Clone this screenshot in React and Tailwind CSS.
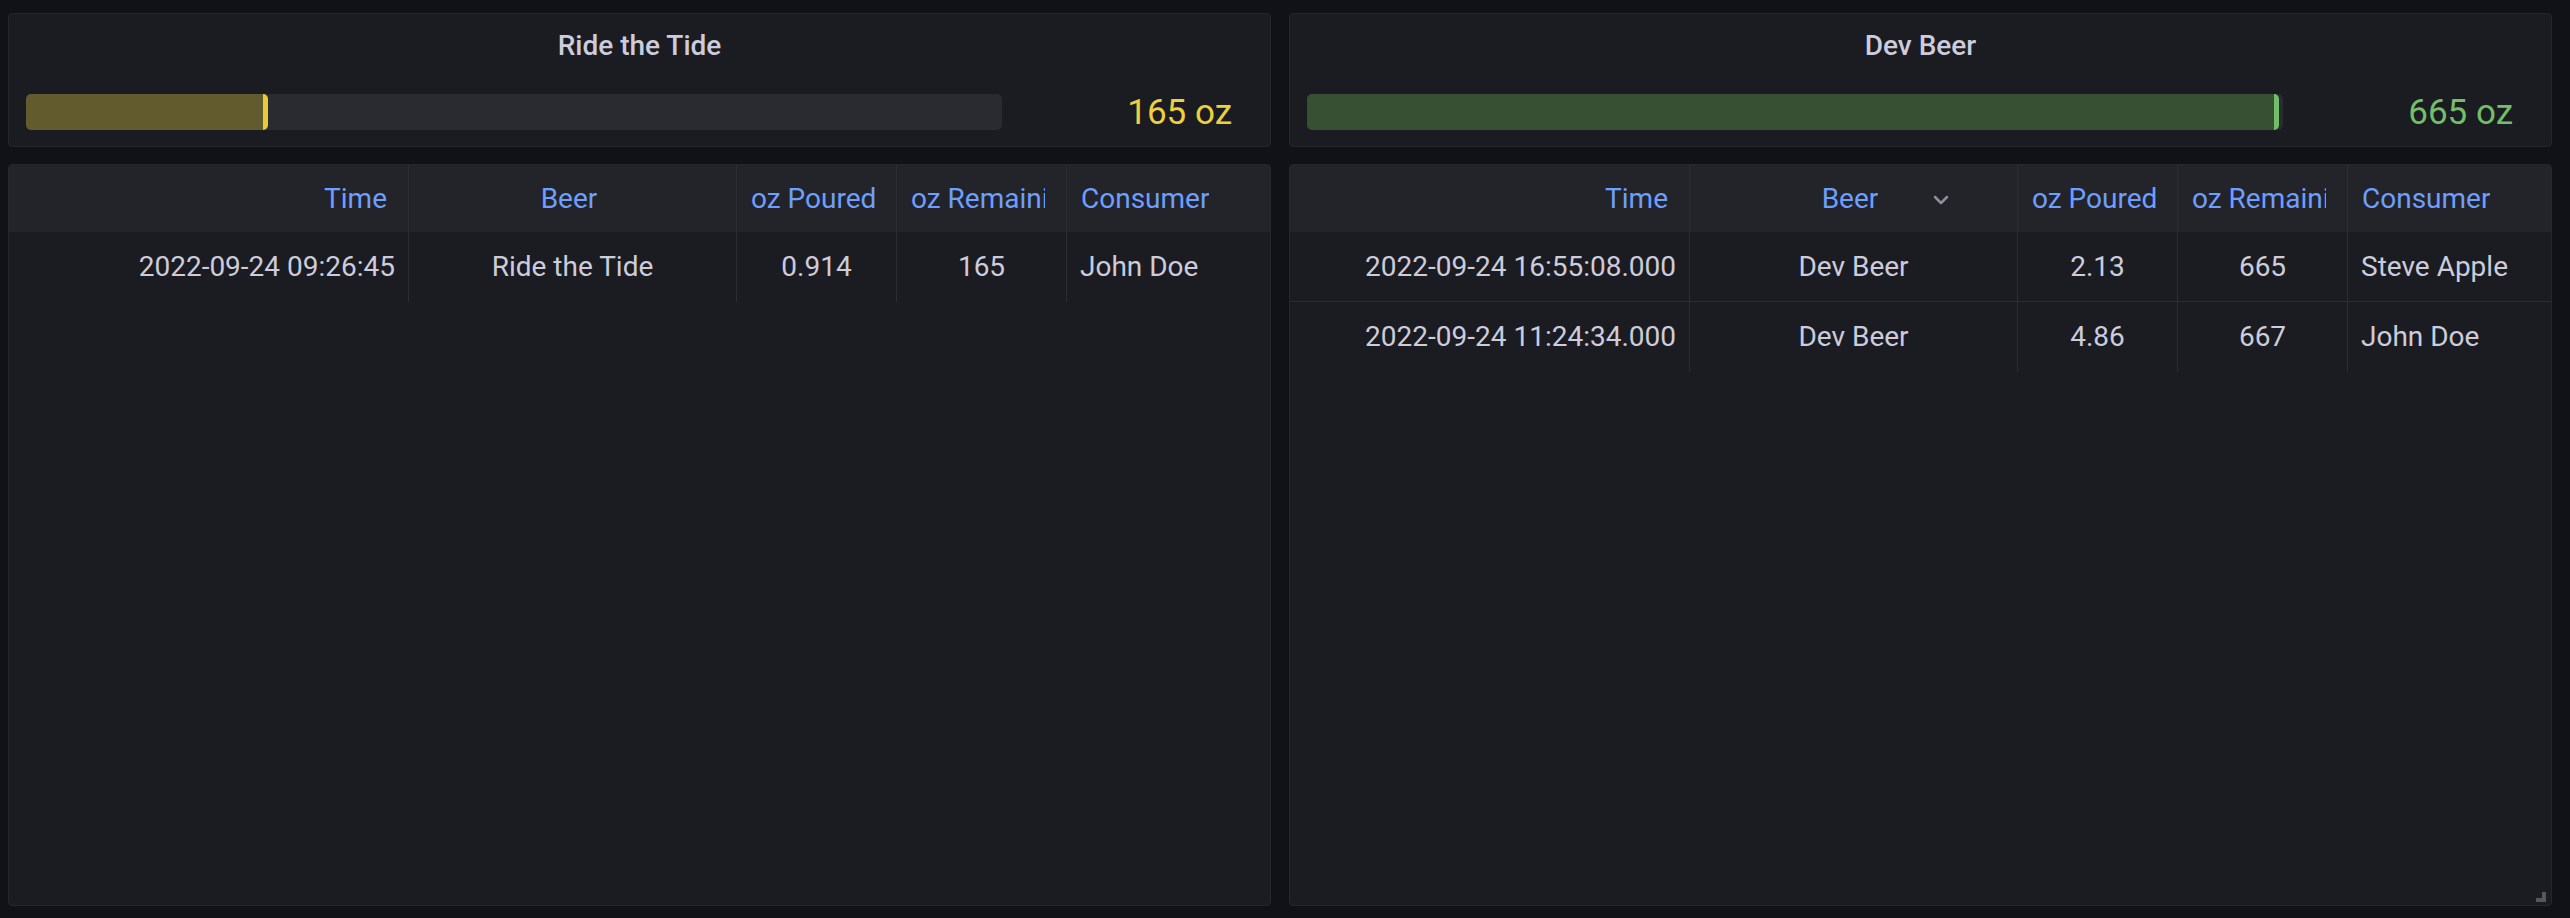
import React from 'react';

const font = { fontFamily: 'Roboto, "Liberation Sans", sans-serif' };

const columns = [
  { key: 'time', label: 'Time', width: 'w-[400px]', head: 'justify-end text-right', cell: 'justify-end text-right' },
  { key: 'beer', label: 'Beer', width: 'w-[328px]', head: 'justify-center text-center', cell: 'justify-center text-center' },
  { key: 'poured', label: 'oz Poured', width: 'w-[160px]', head: 'justify-center text-center', cell: 'justify-center text-center' },
  { key: 'remaining', label: 'oz Remaining', width: 'w-[170px]', head: 'justify-center text-center', cell: 'justify-center text-center' },
  { key: 'consumer', label: 'Consumer', width: 'flex-1', head: 'justify-start text-left', cell: 'justify-start text-left' },
];

const panels = [
  {
    title: 'Ride the Tide',
    value: '165',
    pct: 24.8,
    fill: 'bg-[#625b2e]',
    marker: 'bg-[#ecc93a]',
    text: 'text-[#ecd03f]',
    filterCol: null,
    rows: [
      { time: '2022-09-24 09:26:45', beer: 'Ride the Tide', poured: '0.914', remaining: '165', consumer: 'John Doe' },
    ],
  },
  {
    title: 'Dev Beer',
    value: '665',
    pct: 99.6,
    fill: 'bg-[#374f33]',
    marker: 'bg-[#73bf69]',
    text: 'text-[#73bf69]',
    filterCol: 'beer',
    resize: true,
    rows: [
      { time: '2022-09-24 16:55:08.000', beer: 'Dev Beer', poured: '2.13', remaining: '665', consumer: 'Steve Apple' },
      { time: '2022-09-24 11:24:34.000', beer: 'Dev Beer', poured: '4.86', remaining: '667', consumer: 'John Doe' },
    ],
  },
];

const Chevron = () => (
  <svg width="16" height="10" viewBox="0 0 16 10" className="absolute right-[68px] top-[30px]">
    <path d="M2 2 L8 8 L14 2" fill="none" stroke="#8e8e9e" strokeWidth="2.5" strokeLinecap="round" strokeLinejoin="round" />
  </svg>
);

const GaugePanel = ({ panel }) => (
  <div className="h-[134px] rounded-[4px] border border-[#25272c] bg-[#1b1c21] flex flex-col">
    <div className="h-[64px] flex items-center justify-center text-[28px] font-medium text-[#ccccdc]">
      {panel.title}
    </div>
    <div className="mt-[16px] flex items-center pl-[17px] pr-[38px]">
      <div className="w-[976px] h-[36px] rounded-[5px] bg-[#2a2b30] flex">
        <div className={`h-full rounded-[5px] flex justify-end ${panel.fill}`} style={{ width: `${panel.pct}%` }}>
          <div className={`h-full w-[5px] rounded-r-[5px] ${panel.marker}`} />
        </div>
      </div>
      <div className={`flex-1 text-right text-[35px] leading-none ${panel.text}`}>
        {panel.value} oz
      </div>
    </div>
  </div>
);

const TablePanel = ({ panel }) => (
  <div className="relative h-[742px] rounded-[4px] border border-[#25272c] bg-[#1b1c21] overflow-hidden">
    {/* Header */}
    <div className="flex h-[67px] bg-[#22242a]">
      {columns.map((col, i) => (
        <div
          key={col.key}
          className={`relative flex items-center pl-[14px] pr-[21px] ${col.width} ${col.head} ${i < columns.length - 1 ? 'border-r border-[#2b2d32]' : ''}`}
        >
          <span className="block overflow-hidden whitespace-nowrap text-[28px] text-[#6e9fff]">{col.label}</span>
          {panel.filterCol === col.key && <Chevron />}
        </div>
      ))}
    </div>
    {/* Rows */}
    {panel.rows.map((row, r) => (
      <div
        key={r}
        className={`flex h-[70px] ${r < panel.rows.length - 1 ? 'border-b border-[#2b2d32]' : ''}`}
      >
        {columns.map((col, i) => (
          <div
            key={col.key}
            className={`flex items-center px-[13px] ${col.width} ${col.cell} ${i < columns.length - 1 ? 'border-r border-[#2b2d32]' : ''}`}
          >
            <span className="whitespace-nowrap overflow-hidden text-[28px] text-[#ccccdc]">{row[col.key]}</span>
          </div>
        ))}
      </div>
    ))}
    {panel.resize && (
      <div className="absolute right-[5px] bottom-[3px] w-[10px] h-[10px] border-r-[4px] border-b-[4px] border-[#56575c]" />
    )}
  </div>
);

export default function App() {
  return (
    <div className="w-[2570px] h-[918px] bg-[#111217] pt-[13px] pl-[8px] pr-[18px]" style={font}>
      <div className="grid grid-cols-2 grid-rows-[134px_742px] gap-x-[18px] gap-y-[17px]">
        {panels.map((p) => (
          <GaugePanel key={p.title + '-g'} panel={p} />
        ))}
        {panels.map((p) => (
          <TablePanel key={p.title + '-t'} panel={p} />
        ))}
      </div>
    </div>
  );
}
